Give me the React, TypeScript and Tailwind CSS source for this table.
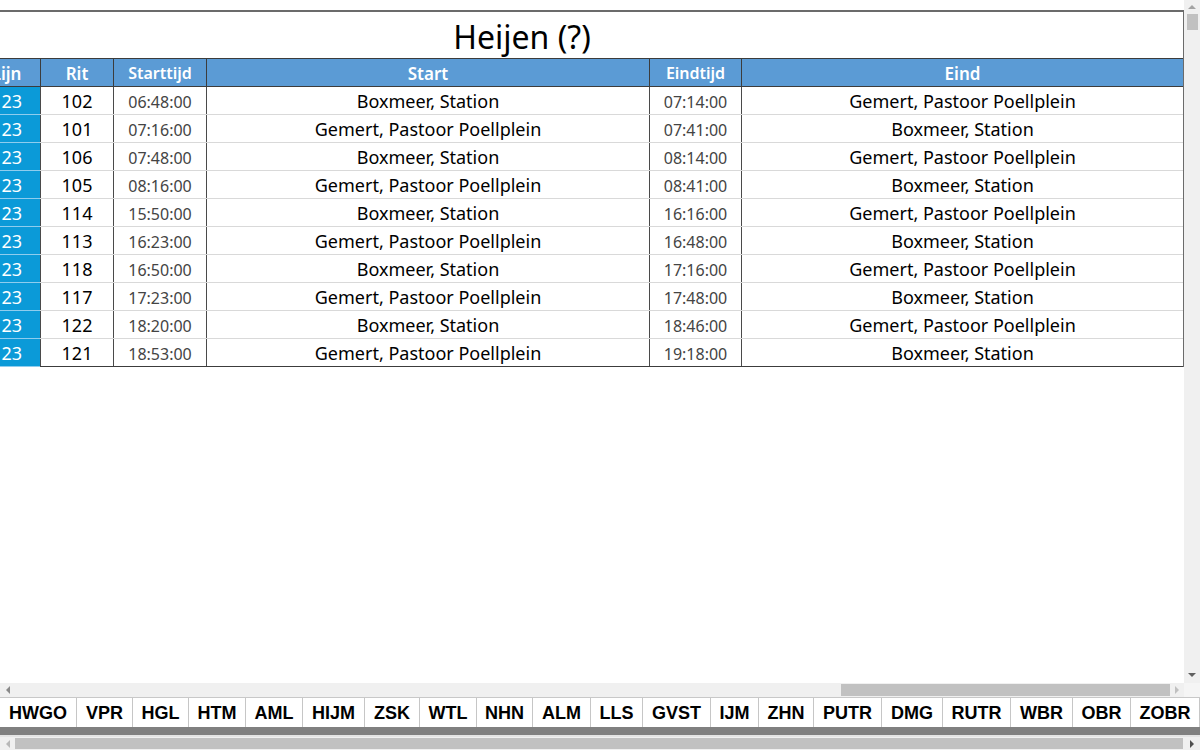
import React from "react";

interface Rit {
  rit: number;
  start: string;
  from: string;
  end: string;
  to: string;
}

const A = "Boxmeer, Station";
const B = "Gemert, Pastoor Poellplein";

const ritten: Rit[] = [
  { rit: 102, start: "06:48:00", from: A, end: "07:14:00", to: B },
  { rit: 101, start: "07:16:00", from: B, end: "07:41:00", to: A },
  { rit: 106, start: "07:48:00", from: A, end: "08:14:00", to: B },
  { rit: 105, start: "08:16:00", from: B, end: "08:41:00", to: A },
  { rit: 114, start: "15:50:00", from: A, end: "16:16:00", to: B },
  { rit: 113, start: "16:23:00", from: B, end: "16:48:00", to: A },
  { rit: 118, start: "16:50:00", from: A, end: "17:16:00", to: B },
  { rit: 117, start: "17:23:00", from: B, end: "17:48:00", to: A },
  { rit: 122, start: "18:20:00", from: A, end: "18:46:00", to: B },
  { rit: 121, start: "18:53:00", from: B, end: "19:18:00", to: A },
];

const tabs: { name: string; w: number }[] = [
  { name: "HWGO", w: 77 },
  { name: "VPR", w: 56 },
  { name: "HGL", w: 56 },
  { name: "HTM", w: 57 },
  { name: "AML", w: 57 },
  { name: "HIJM", w: 62 },
  { name: "ZSK", w: 55 },
  { name: "WTL", w: 57 },
  { name: "NHN", w: 56 },
  { name: "ALM", w: 58 },
  { name: "LLS", w: 52 },
  { name: "GVST", w: 68 },
  { name: "IJM", w: 48 },
  { name: "ZHN", w: 55 },
  { name: "PUTR", w: 68 },
  { name: "DMG", w: 61 },
  { name: "RUTR", w: 68 },
  { name: "WBR", w: 62 },
  { name: "OBR", w: 58 },
  { name: "ZOBR", w: 69 },
];

const Arrow = ({ dir, color }: { dir: "l" | "r" | "u" | "d"; color: string }) => {
  const pts = {
    l: "5,0 5,8 1,4",
    r: "1,0 1,8 5,4",
    u: "0,5 8,5 4,1",
    d: "0,1 8,1 4,5",
  }[dir];
  const vertical = dir === "u" || dir === "d";
  return (
    <svg width={vertical ? 8 : 6} height={vertical ? 6 : 8} viewBox={vertical ? "0 0 8 6" : "0 0 6 8"}>
      <polygon points={pts} fill={color} />
    </svg>
  );
};

const App: React.FC = () => {
  return (
    <div className="w-[1200px] h-[750px] flex flex-col bg-white overflow-hidden font-['Noto_Sans','Open_Sans',sans-serif] text-black">
      {/* sheet + vertical scrollbar */}
      <div className="flex h-[683px]">
        <div className="w-[1184px] pt-[10px] overflow-hidden">
          <div className="w-[1184px] border-t-2 border-r border-[#6b6b6b] overflow-hidden">
            {/* title */}
            <div className="h-[46px] flex items-end">
              <div className="w-[1044px] flex justify-center text-[32px] leading-[40px] pb-[1px]">Heijen (?)</div>
            </div>

            {/* header */}
            <div className="-ml-[27px] w-[1210px] flex h-[29px] bg-[#5b9bd5] border-y border-[#3c3c3c] text-white font-semibold text-[17px] leading-none">
              <div className="w-[67px] flex items-center justify-center pt-[1px]">Lijn</div>
              <div className="w-[73px] flex items-center justify-center pt-[1px] border-l border-[#3c3c3c]">Rit</div>
              <div className="w-[93px] flex items-center justify-center pt-[1px] border-l border-[#3c3c3c] text-[16px]">Starttijd</div>
              <div className="w-[443px] flex items-center justify-center pt-[1px] border-l border-[#3c3c3c]">Start</div>
              <div className="w-[92px] flex items-center justify-center pt-[1px] border-l border-[#3c3c3c] text-[16px]">Eindtijd</div>
              <div className="w-[442px] flex items-center justify-center pt-[1px] border-l border-[#3c3c3c]">Eind</div>
            </div>

            {/* rows */}
            {ritten.map((r, i) => {
              const last = i === ritten.length - 1;
              return (
                <div
                  key={r.rit}
                  className={`-ml-[27px] w-[1210px] flex h-[28px] border-b leading-none ${last ? "border-[#3c3c3c]" : "border-[#d9d9d9]"}`}
                >
                  <div className="w-[67px] flex items-center justify-end pr-[18px] bg-[#0b9ad8] text-white text-[18px] -mb-[1px] border-b border-[#8fcdee]">
                    23
                  </div>
                  <div className="w-[73px] flex items-center justify-center border-l border-[#4a4a4a] text-[18px]">
                    {r.rit}
                  </div>
                  <div className="w-[93px] flex items-center justify-center pt-[2px] border-l border-[#4a4a4a] text-[16px] text-[#444444]">
                    {r.start}
                  </div>
                  <div className="w-[443px] flex items-center justify-center border-l border-[#4a4a4a] text-[18px]">
                    {r.from}
                  </div>
                  <div className="w-[92px] flex items-center justify-center pt-[2px] border-l border-[#4a4a4a] text-[16px] text-[#444444]">
                    {r.end}
                  </div>
                  <div className="w-[442px] flex items-center justify-center border-l border-[#4a4a4a] text-[18px]">
                    {r.to}
                  </div>
                </div>
              );
            })}
          </div>
        </div>

        {/* vertical scrollbar */}
        <div className="w-[16px] bg-[#f0f0f0] flex flex-col items-center">
          <div className="h-[14px] flex items-center">
            <Arrow dir="u" color="#a3a3a3" />
          </div>
          <div className="w-[11px] h-[16px] bg-[#c1c1c1]" />
          <div className="flex-1" />
          <div className="h-[16px] flex items-center">
            <Arrow dir="d" color="#606060" />
          </div>
        </div>
      </div>

      {/* horizontal scrollbar (sheet) */}
      <div className="h-[14px] flex bg-[#f0f0f0]">
        <div className="w-[16px] flex items-center justify-center">
          <Arrow dir="l" color="#8a8a8a" />
        </div>
        <div className="w-[825px]" />
        <div className="w-[329px] h-[12px] mt-[1px] bg-[#c1c1c1]" />
        <div className="w-[14px] flex items-center justify-center">
          <Arrow dir="r" color="#c0c0c0" />
        </div>
        <div className="flex-1 bg-[#f5f5f5]" />
      </div>

      {/* sheet tabs */}
      <div className="h-[30px] flex border-t border-[#c8c8c8] bg-white font-['Liberation_Sans',Arial,sans-serif] font-bold text-[18px]">
        {tabs.map((t) => (
          <div
            key={t.name}
            style={{ width: t.w }}
            className="shrink-0 flex items-center justify-center pt-[2px] border-r border-[#c6c6c6]"
          >
            {t.name}
          </div>
        ))}
      </div>

      {/* dark bar */}
      <div className="h-[8px] bg-[#808080]" />

      {/* bottom scrollbar */}
      <div className="h-[15px] flex items-center bg-[#f0f0f0] border-t-2 border-[#e4e4e4]">
        <div className="w-[15px] flex items-center justify-center">
          <Arrow dir="l" color="#b8b8b8" />
        </div>
        <div className="w-[1168px] h-[11px] bg-[#c1c1c1]" />
        <div className="flex-1 flex items-center justify-center">
          <Arrow dir="r" color="#505050" />
        </div>
      </div>
    </div>
  );
};

export default App;
